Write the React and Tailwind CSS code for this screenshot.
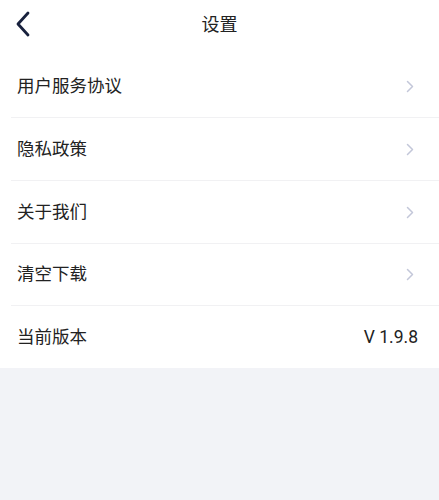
import React from "react";

const items = [
    { t: "用户服务协议", h: "h-[63px]" },
    { t: "隐私政策", h: "h-[63px]" },
    { t: "关于我们", h: "h-[63px]" },
    { t: "清空下载", h: "h-[62px]" },
];

function Chevron() {
    return (
        <svg width="8" height="13" viewBox="0 0 8 13" fill="none">
            <path d="M1.5 1.5L6.5 6.5L1.5 11.5" stroke="#c3c7d9" strokeWidth="1.5" strokeLinecap="round" strokeLinejoin="round" />
        </svg>
    );
}

export default function App() {
    return (
        <div
            className="min-h-[500px] w-full bg-[#f2f3f7] text-[#222]"
            style={{ fontFamily: 'Roboto, "Noto Sans CJK SC", sans-serif' }}
        >
            {/* header */}
            <div className="relative flex h-[55px] items-center justify-center bg-white">
                <button className="absolute left-[14px] top-[11px] p-0">
                    <svg width="18" height="26" viewBox="0 0 18 26" fill="none">
                        <path d="M14 2L4 13L14 24" stroke="#18213d" strokeWidth="2.8" strokeLinecap="round" strokeLinejoin="round" />
                    </svg>
                </button>
                <h1 className="-mt-[7px] text-[18px] font-normal">设置</h1>
            </div>

            {/* list */}
            <div className="bg-white">
                {items.map((it) => (
                    <div key={it.t} className={`ml-[11px] flex ${it.h} items-center justify-between border-b border-[#f1f1f3] pl-[6px] pr-[25px]`}>
                        <span className="text-[17.5px]">{it.t}</span>
                        <Chevron />
                    </div>
                ))}
                <div className="ml-[11px] flex h-[62px] items-center justify-between pl-[6px] pr-[21px]">
                    <span className="text-[17.5px]">当前版本</span>
                    <span className="text-[17.5px]">V 1.9.8</span>
                </div>
            </div>
        </div>
    );
}
